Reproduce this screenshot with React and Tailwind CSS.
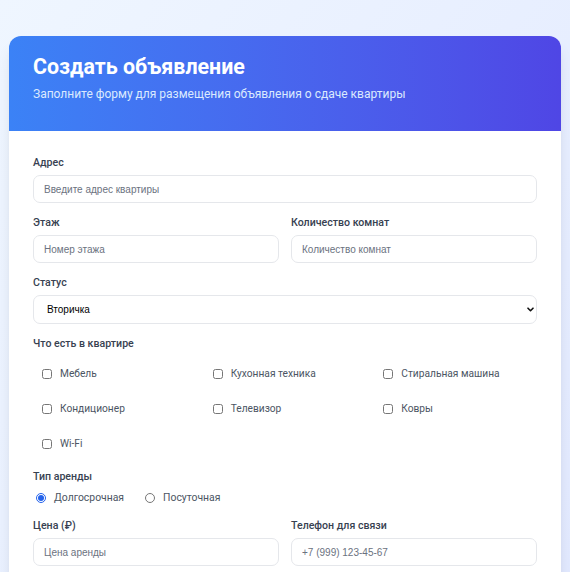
import { useState } from "react";

const amenities = [
  "Мебель",
  "Кухонная техника",
  "Стиральная машина",
  "Кондиционер",
  "Телевизор",
  "Ковры",
  "Wi-Fi",
];

const labelCls =
  "block h-4 leading-4 mb-1 text-[10.6px] font-medium text-[#374151]";
const inputCls =
  "w-full h-[28px] px-[10px] rounded-[7px] border border-[#e5e7eb] bg-white text-[10px] text-[#111827] placeholder:text-[#6b7280] outline-none font-['Liberation_Sans',Arial,sans-serif]";

function Field({ label, placeholder }) {
  return (
    <div>
      <label className={labelCls}>{label}</label>
      <input className={inputCls} placeholder={placeholder} />
    </div>
  );
}

export default function App() {
  const [rent, setRent] = useState("long");

  return (
    <div className="min-h-screen bg-gradient-to-br from-[#eff6ff] to-[#e0e7ff] px-[9px] py-9 font-['Roboto','Noto_Sans',sans-serif]">
      <div className="bg-white rounded-xl shadow-lg overflow-hidden">
        {/* header */}
        <div className="bg-gradient-to-r from-[#3b82f6] to-[#4f46e5] px-6 pt-[16px] pb-[28px]">
          <h1 className="text-[21.4px] leading-[30px] font-bold text-white">
            Создать объявление
          </h1>
          <p className="mt-[3px] text-[12px] leading-[18px] text-[#dbeafe]">
            Заполните форму для размещения объявления о сдаче квартиры
          </p>
        </div>

        {/* form */}
        <form className="px-6 pt-6 pb-6 space-y-3">
          <Field label="Адрес" placeholder="Введите адрес квартиры" />

          <div className="grid grid-cols-2 gap-3">
            <Field label="Этаж" placeholder="Номер этажа" />
            <Field label="Количество комнат" placeholder="Количество комнат" />
          </div>

          <div>
            <label className={labelCls}>Статус</label>
            <div className="relative">
              <select className="appearance-none w-full h-[29px] pl-[13px] pr-6 rounded-[7px] border border-[#e5e7eb] bg-white text-[10px] text-black outline-none font-['Liberation_Sans',Arial,sans-serif]">
                <option>Вторичка</option>
                <option>Новостройка</option>
              </select>
              <svg
                className="absolute right-[3px] top-[12px] pointer-events-none"
                width="7"
                height="5"
                viewBox="0 0 7 5"
                fill="none"
              >
                <path
                  d="M1 1.2l2.5 2.5 2.5-2.5"
                  stroke="#111"
                  strokeWidth="1.6"
                  strokeLinecap="round"
                  strokeLinejoin="round"
                />
              </svg>
            </div>
          </div>

          <div>
            <label className={`${labelCls} !mb-2`}>Что есть в квартире</label>
            <div className="grid grid-cols-3 gap-2">
              {amenities.map((a) => (
                <label
                  key={a}
                  className="flex items-center gap-2 h-[27px] pl-[9px] text-[10.2px] text-[#4b5563]"
                >
                  <input type="checkbox" className="w-[10px] h-[10px]" />
                  {a}
                </label>
              ))}
            </div>
          </div>

          <div>
            <label className={labelCls}>Тип аренды</label>
            <div className="flex items-center h-4 mt-[5px] text-[10.4px] text-[#4b5563]">
              <label className="flex items-center gap-2 ml-[3px]">
                <input
                  type="radio"
                  name="rent"
                  className="w-[10px] h-[10px] accent-[#2563eb]"
                  checked={rent === "long"}
                  onChange={() => setRent("long")}
                />
                Долгосрочная
              </label>
              <label className="flex items-center gap-2 ml-[21px]">
                <input
                  type="radio"
                  name="rent"
                  className="w-[10px] h-[10px] accent-[#2563eb]"
                  checked={rent === "day"}
                  onChange={() => setRent("day")}
                />
                Посуточная
              </label>
            </div>
          </div>

          <div className="grid grid-cols-2 gap-3">
            <Field label="Цена (₽)" placeholder="Цена аренды" />
            <Field label="Телефон для связи" placeholder="+7 (999) 123-45-67" />
          </div>

          <div>
            <label className={labelCls}>Описание</label>
            <textarea
              rows={4}
              className="w-full px-[10px] py-2 rounded-[7px] border border-[#e5e7eb] text-[10px] outline-none"
              placeholder="Расскажите о квартире"
            />
          </div>

          <button
            type="button"
            className="w-full h-[32px] rounded-[7px] bg-gradient-to-r from-[#3b82f6] to-[#4f46e5] text-white text-[12px] font-semibold"
          >
            Опубликовать объявление
          </button>
        </form>
      </div>
    </div>
  );
}
